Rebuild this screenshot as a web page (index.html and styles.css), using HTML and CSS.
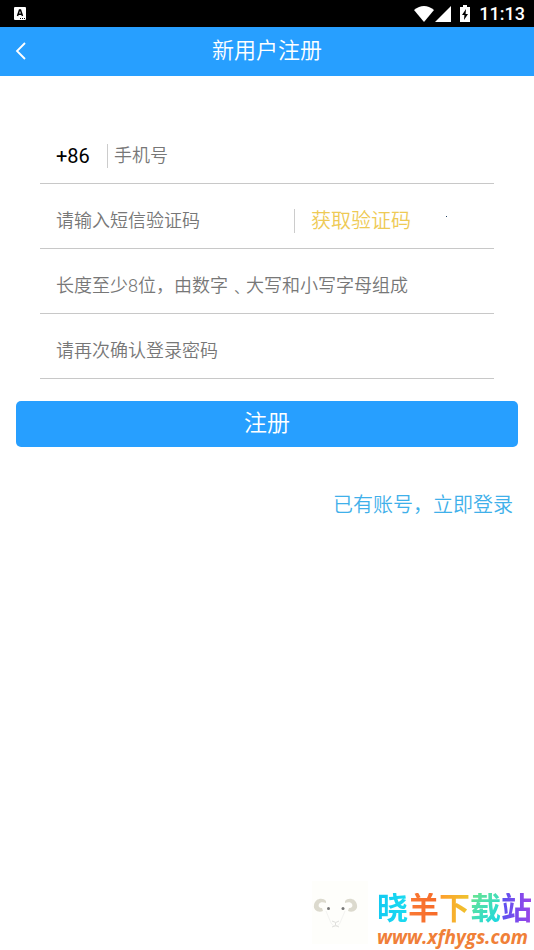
FILE: index.html
```html
<!DOCTYPE html>
<html lang="zh-CN">
<head>
<meta charset="utf-8">
<meta name="viewport" content="width=device-width, initial-scale=1">
<title>新用户注册</title>
<link rel="stylesheet" href="styles.css">
</head>
<body>
<div class="status">
  <svg class="status-app" viewBox="0 0 12 13" aria-hidden="true"><rect width="12" height="13" rx="1" fill="#fff"/><path d="M3.500 9 5.500 3h1L8.500 9M4.400 7.200h3.200" fill="none" stroke="#000" stroke-width="1.500"/><path d="M6 11.500h5" stroke="#000" stroke-width="1" stroke-dasharray="1 1"/></svg>
  <div class="status-right">
    <svg class="wifi" viewBox="0 0 20 16" aria-hidden="true"><path d="M0 4Q10-4 20 4L10 16Z" fill="#fff"/></svg>
    <svg class="signal" viewBox="0 0 16 16" aria-hidden="true"><path d="M16 0v16H0Z" fill="#fff"/></svg>
    <svg class="battery" viewBox="0 0 10 17" aria-hidden="true"><path d="M3 0h4v2h3v15H0V2h3Z" fill="#fff"/><path d="M6 4 2 10h2.400L4 15l4-6H5.600Z" fill="#000"/></svg>
    <span class="clock">11:13</span>
  </div>
</div>
<header class="header">
  <button class="back" type="button" aria-label="返回"><svg viewBox="0 0 12 18" aria-hidden="true"><path d="M11 1 3 9l8 8" fill="none" stroke="#fff" stroke-width="1.800"/></svg></button>
  <h1 class="title">新用户注册</h1>
</header>
<main class="main">
  <form class="form">
    <div class="fields">
      <div class="row">
        <label class="prefix" for="phone">+86</label>
        <input class="input" id="phone" type="tel" placeholder="手机号">
      </div>
      <div class="row">
        <input class="input" type="text" aria-label="短信验证码" placeholder="请输入短信验证码">
        <div class="code"><button class="code-button" type="button">获取验证码</button><span class="speck"></span></div>
      </div>
      <div class="row">
        <input class="input" type="password" aria-label="登录密码" placeholder="长度至少8位，由数字﹑大写和小写字母组成">
      </div>
      <div class="row">
        <input class="input" type="password" aria-label="确认登录密码" placeholder="请再次确认登录密码">
      </div>
    </div>
    <button class="submit" type="submit">注册</button>
    <a class="login" href="#login">已有账号，立即登录</a>
  </form>
</main>
<footer class="mark">
  <svg class="sheep" viewBox="0 0 66 66" aria-hidden="true">
    <rect x="8" y="1" width="56" height="63" fill="#fefefb"/>
    <path d="M22 21c-3-4-11-3-12 4-1 5 4 8 9 6l-1-3c-3 0-4-2-3-4s4-2 7-1Z" fill="#dcdace"/>
    <path d="M41 21c3-4 11-3 12 4 1 5-4 8-9 6l1-3c3 0 4-2 3-4s-4-2-7-1Z" fill="#dcdace"/>
    <path d="M22 31 27 43q5 7 9 0l5-12" fill="none" stroke="#f3f3f1"/>
    <path d="M28 41q4 3 7 0M31.500 43v2M28 47q4-3 7 0" fill="none" stroke="#dededb"/>
    <circle cx="24.500" cy="28.500" r="1.500" fill="#777"/><circle cx="39" cy="28.500" r="1.500" fill="#777"/>
  </svg>
  <div class="mark-text">
    <div class="mark-name"><span class="c1">晓</span><span class="c2">羊</span><span class="c3">下</span><span class="c4">载</span><span class="c5">站</span></div>
    <div class="mark-url">www.xfhygs.com</div>
  </div>
</footer>
</body>
</html>
```
FILE: styles.css
```css
* { box-sizing: border-box; }
body {
  margin: 0;
  min-height: 100vh;
  display: flex;
  flex-direction: column;
  background: #fff;
  font-family: Roboto, "Noto Sans CJK SC", sans-serif;
  font-weight: 350;
}
button, input { font: inherit; border: 0; padding: 0; background: none; }
svg { display: block; }
.status {
  height: 27px;
  padding: 0 9px 0 14px;
  display: flex;
  align-items: center;
  justify-content: space-between;
  background: #000;
  color: #fff;
}
.status-app { width: 12px; height: 13px; }
.status-right { display: flex; align-items: center; }
.wifi { width: 20px; height: 16px; }
.signal { width: 16px; height: 16px; margin-left: 1px; }
.battery { width: 10px; height: 17px; margin: 0 9px; }
.clock { font-size: 18px; line-height: 27px; font-weight: 500; }
.header {
  height: 49px;
  padding-bottom: 2px;
  display: grid;
  grid-template-columns: 48px 1fr 48px;
  align-items: center;
  background: #279fff;
}
.back { height: 46px; padding-left: 14px; }
.back svg { width: 12px; height: 18px; }
.title {
  margin: 0;
  color: #fff;
  font-size: 22px;
  line-height: 32px;
  font-weight: 350;
  text-align: center;
}
.main { flex: 1; padding: 43px 16px 0; }
.form { display: flex; flex-direction: column; }
.fields { padding: 0 24px; }
.row {
  height: 65px;
  padding: 9px 0 0 16px;
  display: flex;
  align-items: center;
  border-bottom: 1px solid #c8c8c8;
}
.prefix {
  width: 52px;
  margin-right: 6px;
  border-right: 1px solid #ccc;
  font-size: 20px;
  line-height: 24px;
  font-weight: 400;
  color: #000;
}
.input {
  flex: 1;
  min-width: 0;
  height: 32px;
  font-size: 18px;
  color: #333;
  outline: 0;
}
.input::placeholder { color: #777; opacity: 1; }
.code {
  width: 200px;
  height: 24px;
  padding-left: 16px;
  display: flex;
  align-items: center;
  border-left: 1px solid #ccc;
}
.code-button { color: #eeca55; font-size: 20px; line-height: 24px; }
.speck { width: 1px; height: 1px; margin: 0 0 8px 35px; background: #246; }
.submit {
  height: 46px;
  margin-top: 22px;
  padding-bottom: 6px;
  border-radius: 5px;
  background: #279fff;
  color: #fff;
  font-size: 23px;
}
.login {
  align-self: flex-end;
  margin: 42px 5px 0 0;
  color: #3fb0ea;
  font-size: 20px;
  line-height: 32px;
  text-decoration: none;
}
.mark { display: flex; justify-content: flex-end; align-items: flex-end; padding: 0 2px 1px 0; }
.sheep { width: 66px; height: 66px; margin: 0 7px 3px 0; }
.mark-name {
  display: flex;
  font-size: 31px;
  line-height: 32px;
  font-weight: 700;
}
.mark-name span { color: transparent; background-clip: text; -webkit-background-clip: text; }
.c1 { background-image: linear-gradient(90deg, #12c9f2, #1bdcf0); }
.c2 { background-image: linear-gradient(90deg, #fa7a35, #f66a28); }
.c3 { background-image: linear-gradient(90deg, #ff9d2c, #eec52e); }
.c4 { background-image: linear-gradient(135deg, #6fe58a, #12d6ea); }
.c5 { background-image: linear-gradient(90deg, #5a52f0, #9b45e8); }
.mark-url {
  font-family: "Open Sans", sans-serif;
  font-size: 19px;
  line-height: 24px;
  font-weight: 700;
  font-style: italic;
  color: #f08038;
}
```
